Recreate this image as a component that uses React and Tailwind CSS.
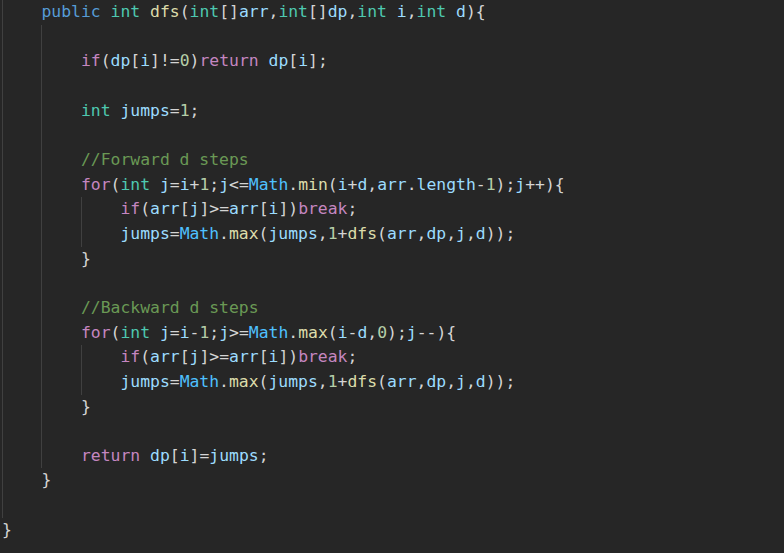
import React from "react";

const lines = [
  { text: "    public int dfs(int[]arr,int[]dp,int i,int d){", guides: [0] },
  { text: "", guides: [0, 4] },
  { text: "        if(dp[i]!=0)return dp[i];", guides: [0, 4] },
  { text: "", guides: [0, 4] },
  { text: "        int jumps=1;", guides: [0, 4] },
  { text: "", guides: [0, 4] },
  { text: "        //Forward d steps", guides: [0, 4] },
  { text: "        for(int j=i+1;j<=Math.min(i+d,arr.length-1);j++){", guides: [0, 4] },
  { text: "            if(arr[j]>=arr[i])break;", guides: [0, 4, 8] },
  { text: "            jumps=Math.max(jumps,1+dfs(arr,dp,j,d));", guides: [0, 4, 8] },
  { text: "        }", guides: [0, 4] },
  { text: "", guides: [0, 4] },
  { text: "        //Backward d steps", guides: [0, 4] },
  { text: "        for(int j=i-1;j>=Math.max(i-d,0);j--){", guides: [0, 4] },
  { text: "            if(arr[j]>=arr[i])break;", guides: [0, 4, 8] },
  { text: "            jumps=Math.max(jumps,1+dfs(arr,dp,j,d));", guides: [0, 4, 8] },
  { text: "        }", guides: [0, 4] },
  { text: "", guides: [0, 4] },
  { text: "        return dp[i]=jumps;", guides: [0, 4] },
  { text: "    }", guides: [0] },
  { text: "", guides: [0] },
  { text: "}", guides: [] },
];

const control = ["if", "for", "return", "break"];

// tiny java-ish highlighter, good enough for this snippet
function tokenize(src) {
  const out = [];
  if (src.trim().startsWith("//")) {
    out.push({ t: src, c: "text-[#6a9955]" });
    return out;
  }
  const re = /([A-Za-z_]\w*)|(\d+)|(\s+)|([^\w\s])/g;
  let m;
  while ((m = re.exec(src))) {
    const [tok, word, num] = m;
    if (word) {
      const next = src[re.lastIndex];
      if (word === "public") out.push({ t: tok, c: "text-[#569cd6]" });
      else if (word === "int") out.push({ t: tok, c: "text-[#4ec9b0]" });
      else if (word === "Math") out.push({ t: tok, c: "text-[#4fc1ff]" });
      else if (control.includes(word)) out.push({ t: tok, c: "text-[#c586c0]" });
      else if (next === "(") out.push({ t: tok, c: "text-[#dcdcaa]" });
      else out.push({ t: tok, c: "text-[#9cdcfe]" });
    } else if (num) {
      out.push({ t: tok, c: "text-[#b5cea8]" });
    } else {
      out.push({ t: tok, c: "text-[#d4d4d4]" });
    }
  }
  return out;
}

function Line({ text, guides }) {
  const indent = text.match(/^ */)[0].length;
  const body = text.slice(indent);
  const cols = Math.max(indent / 4, guides.length);
  return (
    <div className="flex h-[24.67px] items-center whitespace-pre">
      {Array.from({ length: cols }).map((_, k) => (
        <span
          key={k}
          className={
            "h-full w-[4ch] shrink-0 " +
            (guides.includes(k * 4) ? "border-l border-[#404040]" : "")
          }
        />
      ))}
      {tokenize(body).map((tok, k) => (
        <span key={k} className={tok.c}>
          {tok.t}
        </span>
      ))}
    </div>
  );
}

export default function App() {
  return (
    <div className="h-[553px] w-[784px] overflow-hidden bg-[#262626] pl-[2px] font-['DejaVu_Sans_Mono','Liberation_Mono',monospace] text-[16.4px]">
      {lines.map((l, i) => (
        <Line key={i} {...l} />
      ))}
    </div>
  );
}
